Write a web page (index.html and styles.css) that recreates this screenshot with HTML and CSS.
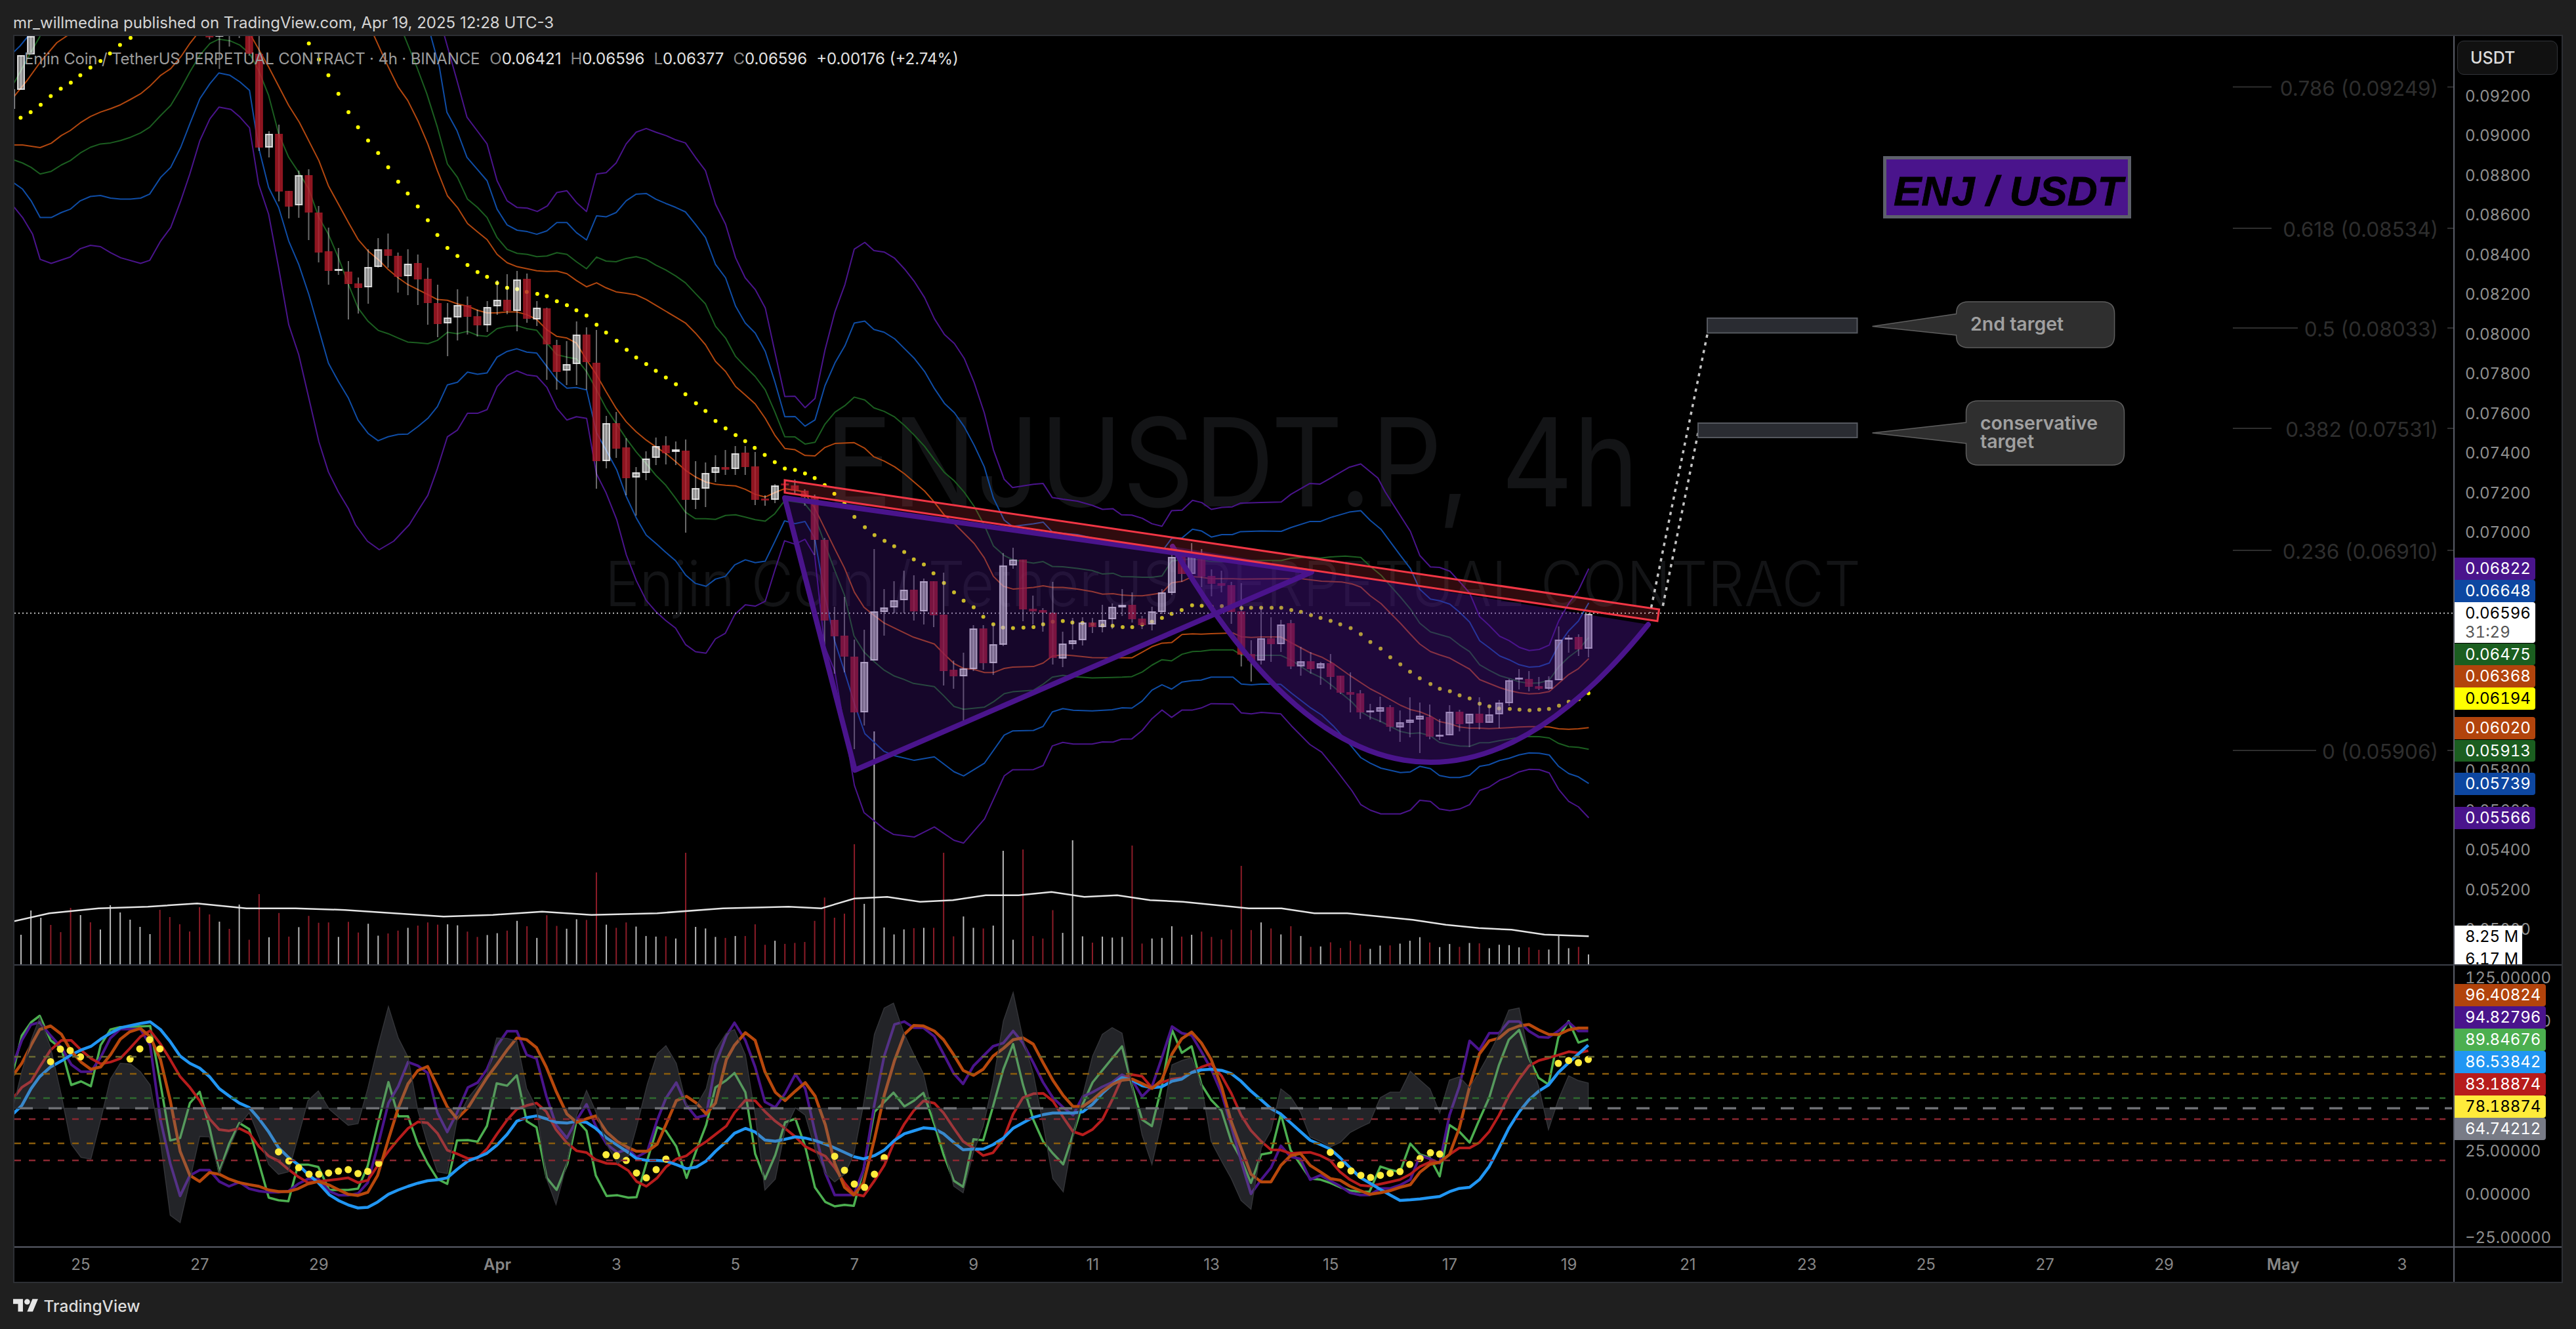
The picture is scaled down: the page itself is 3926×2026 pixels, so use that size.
FILE: index.html
```html
<!DOCTYPE html>
<html lang="en">
<head>
<meta charset="utf-8">
<title>ENJUSDT.P 4h chart</title>
<link rel="stylesheet" href="styles.css">
</head>
<body>
<header class="topbar">mr_willmedina published on TradingView.com, Apr 19, 2025 12:28 UTC-3</header>
<main class="frame">
  <section class="pane pane-main">
    <svg class="chart" id="mainChart" width="3717" height="1415" viewBox="22 55 3717 1415" xmlns="http://www.w3.org/2000/svg">
      <text class="wm wm-big" x="1258" y="772" textLength="1240" lengthAdjust="spacingAndGlyphs">ENJUSDT.P, 4h</text>
      <text class="wm wm-small" x="922" y="924" textLength="1914" lengthAdjust="spacingAndGlyphs">Enjin Coin / TetherUS PERPETUAL CONTRACT</text>
      <g id="series"></g>
      <line class="last-price" x1="22" y1="934.7" x2="3739" y2="934.7"/>
      <g class="drawings">
        <polygon class="tri" points="1196,759 1303,1174 1999,872"/>
        <path class="cup-fill" d="M1787 833 Q2130 1425 2512 952 Z"/>
        <path class="cup-line" d="M1787 833 Q2130 1425 2512 952"/>
        <polygon class="channel" points="1196,732 2528.6,929 2526,946.7 1196,751"/>
        <line class="dotted" x1="2602" y1="510" x2="2515" y2="934"/>
        <line class="dotted" x1="2588" y1="660" x2="2533" y2="930"/>
        <rect class="target" x="2602" y="485" width="228.500" height="22.500"/>
        <rect class="target" x="2588" y="645" width="242.500" height="22"/>
        <path class="callout" d="M3000 460H3204Q3222.600 460 3222.600 478V512Q3222.600 530 3204 530H3000Q2981.500 530 2981.500 512V511L2853.500 497.600L2981.500 478.500Q2981.500 460 3000 460Z"/>
        <text class="callout-text" x="3003" y="504">2nd target</text>
        <path class="callout" d="M3015 611H3219Q3237.500 611 3237.500 629V691Q3237.500 709 3219 709H3015Q2996.500 709 2996.500 691V676L2853.500 660L2996.500 644V629Q2996.500 611 3015 611Z"/>
        <text class="callout-text" x="3018" y="655">conservative</text>
        <text class="callout-text" x="3018" y="683">target</text>
        <rect class="pair-box" x="2872.500" y="240.500" width="373" height="90"/>
        <text class="pair-text" x="2886" y="313">ENJ / USDT</text>
      </g>
      <g class="fibs">
        <line x1="3403" y1="132.600" x2="3462" y2="132.600"/><line x1="3730" y1="132.600" x2="3739" y2="132.600"/>
        <text x="3716" y="146">0.786 (0.09249)</text>
        <line x1="3403" y1="348" x2="3462" y2="348"/><line x1="3730" y1="348" x2="3739" y2="348"/>
        <text x="3716" y="361">0.618 (0.08534)</text>
        <line x1="3403" y1="500" x2="3502" y2="500"/><line x1="3730" y1="500" x2="3739" y2="500"/>
        <text x="3716" y="513">0.5 (0.08033)</text>
        <line x1="3403" y1="653" x2="3462" y2="653"/><line x1="3730" y1="653" x2="3739" y2="653"/>
        <text x="3716" y="666">0.382 (0.07531)</text>
        <line x1="3403" y1="839" x2="3462" y2="839"/><line x1="3730" y1="839" x2="3739" y2="839"/>
        <text x="3716" y="852">0.236 (0.06910)</text>
        <line x1="3403" y1="1144" x2="3530" y2="1144"/><line x1="3730" y1="1144" x2="3739" y2="1144"/>
        <text x="3716" y="1157">0 (0.05906)</text>
      </g>
    </svg>
    <div class="legend">
      <span class="legend-title">Enjin Coin / TetherUS PERPETUAL CONTRACT · 4h · BINANCE</span>
      <span class="ohlc"><i>O</i>0.06421</span>
      <span class="ohlc"><i>H</i>0.06596</span>
      <span class="ohlc"><i>L</i>0.06377</span>
      <span class="ohlc"><i>C</i>0.06596</span>
      <span class="ohlc">+0.00176 (+2.74%)</span>
    </div>
  </section>
  <aside class="axis axis-main">
    <div class="currency">USDT</div>
    <div class="ticks ticks-main">
      <div>0.09200</div><div>0.09000</div><div>0.08800</div><div>0.08600</div><div>0.08400</div><div>0.08200</div>
      <div>0.08000</div><div>0.07800</div><div>0.07600</div><div>0.07400</div><div>0.07200</div><div>0.07000</div>
      <div>0.06800</div><div>0.06600</div><div>0.06400</div><div>0.06200</div><div>0.06000</div><div>0.05800</div>
      <div>0.05600</div><div>0.05400</div><div>0.05200</div><div>0.05000</div>
    </div>
    <div class="badge b-purple" style="top:795px">0.06822</div>
    <div class="badge b-blue" style="top:829px">0.06648</div>
    <div class="badge b-white" style="top:863px"><span>0.06596</span><small>31:29</small></div>
    <div class="badge b-green" style="top:925.500px">0.06475</div>
    <div class="badge b-orange" style="top:959px">0.06368</div>
    <div class="badge b-yellow" style="top:993px">0.06194</div>
    <div class="badge b-orange" style="top:1038px">0.06020</div>
    <div class="badge b-green" style="top:1072.500px">0.05913</div>
    <div class="badge b-blue" style="top:1123px">0.05739</div>
    <div class="badge b-purple" style="top:1175px">0.05566</div>
    <div class="badge badge-vol" style="top:1356px">8.25 M</div>
    <div class="badge badge-vol" style="top:1390px">6.17 M</div>
  </aside>
  <section class="pane pane-osc">
    <svg class="chart" id="oscChart" width="3717" height="428" viewBox="22 1472 3717 428" xmlns="http://www.w3.org/2000/svg"></svg>
  </section>
  <aside class="axis axis-osc">
    <div class="ticks ticks-osc">
      <div>125.00000</div><div>100.00000</div><div>75.00000</div><div>50.00000</div><div>25.00000</div><div>0.00000</div><div>−25.00000</div>
    </div>
    <div class="badge badge-osc b-orange2" style="top:28px">96.40824</div>
    <div class="badge badge-osc b-purple" style="top:62px">94.82796</div>
    <div class="badge badge-osc b-lime" style="top:96px">89.84676</div>
    <div class="badge badge-osc b-sky" style="top:130px">86.53842</div>
    <div class="badge badge-osc b-red" style="top:164px">83.18874</div>
    <div class="badge badge-osc b-lemon" style="top:198px">78.18874</div>
    <div class="badge badge-osc b-grey" style="top:232px">64.74212</div>
  </aside>
  <nav class="timescale">
    <span>25</span><span>27</span><span>29</span><span class="month">Apr</span><span>3</span><span>5</span><span>7</span><span>9</span><span>11</span><span>13</span><span>15</span><span>17</span><span>19</span><span>21</span><span>23</span><span>25</span><span>27</span><span>29</span><span class="month may">May</span><span>3</span>
  </nav>
  <div class="corner"></div>
</main>
<footer class="brand">
  <svg class="brand-logo" width="38.500" height="30" viewBox="0 0 36 28" xmlns="http://www.w3.org/2000/svg"><path d="M14 22H7V11H0V4h14v18zM28 22h-8l7.500-18h8L28 22z"/><circle cx="20" cy="8" r="4"/></svg>
  <span class="brand-name">TradingView</span>
</footer>
<script src="chart.js"></script>
</body>
</html>
```
FILE: styles.css
```css
* { box-sizing: border-box; }
html, body { margin: 0; padding: 0; }
body {
  width: 3926px;
  height: 2026px;
  overflow: hidden;
  background: #1f1f1f;
  font-family: Inter, "Liberation Sans", sans-serif;
  color: #d6d6d6;
}
.topbar {
  height: 53px;
  padding: 20px 0 0 20px;
  font-size: 24px;
  line-height: 30px;
  color: #d4d4d4;
  white-space: nowrap;
}
.frame {
  width: 3886px;
  height: 1903px;
  margin-left: 20px;
  border: 2px solid #2d2f34;
  display: grid;
  grid-template-columns: 3717px 165px;
  grid-template-rows: 1417px 430px 52px;
  background: #000;
}
.pane { position: relative; overflow: hidden; }
.pane-main { border-bottom: 2px solid #3c3f49; }
.pane-osc { border-bottom: 2px solid #5a5d68; }
.chart { display: block; }
.axis {
  position: relative;
  overflow: hidden;
  border-left: 2px solid #5a5d68;
  font-size: 24px;
  color: #8f8f8f;
  font-feature-settings: "tnum" 1;
}
.axis-main { border-bottom: 2px solid #3c3f49; }
.axis-osc { border-bottom: 2px solid #5a5d68; }
.currency {
  margin: 7px 6px 0 4px;
  height: 52px;
  padding-left: 19px;
  border: 1px solid #33353a;
  border-radius: 10px;
  background: #111;
  color: #dcdcdc;
  font-size: 25px;
  font-weight: 500;
  line-height: 50px;
}
.ticks { padding-left: 16px; }
.ticks div { white-space: nowrap; }
.ticks-main { margin-top: 2.750px; }
.ticks-main div { height: 60.500px; line-height: 60.500px; }
.ticks-osc { margin-top: -14px; }
.ticks-osc div { height: 66px; line-height: 66px; }
.badge {
  position: absolute;
  left: 0;
  width: 123px;
  height: 33.800px;
  padding-left: 16px;
  border-radius: 0 4px 4px 0;
  line-height: 33.800px;
  color: #fff;
  white-space: nowrap;
}
.badge-osc { width: 139px; height: 34px; line-height: 34px; }
.badge-vol { width: 103px; height: 34px; line-height: 34px; background: #fff; color: #000; border-radius: 0; }
.b-purple { background: #4a148c; }
.b-blue { background: #0d47a1; }
.b-green { background: #1b5e20; }
.b-orange, .b-orange2 { background: #b2440c; }
.b-yellow { background: #ffff00; color: #000; }
.b-white { height: 62px; background: #fff; color: #000; }
.b-white span, .b-white small { display: block; height: 28px; font-size: 24px; }
.b-white span { height: 34px; line-height: 34px; }
.b-white small { color: #555; line-height: 24px; }
.b-lime { background: #4caf50; }
.b-sky { background: #2196f3; }
.b-red { background: #b71c1c; }
.b-lemon { background: #ffeb3b; color: #000; }
.b-grey { background: #787b86; }
.timescale {
  display: flex;
  padding-left: 10.280px;
  font-size: 24px;
  line-height: 52px;
  color: #868686;
}
.timescale span { flex: 0 0 181.440px; text-align: center; }
.timescale .month { font-weight: 600; margin-left: 90.720px; }
.timescale .may { margin-left: 0; }
.corner { border-left: 2px solid #5a5d68; }
.legend {
  position: absolute;
  left: 15px;
  top: 20px;
  display: flex;
  font-size: 24px;
  line-height: 30px;
  white-space: nowrap;
  color: #e2e2e2;
}
.legend-title { color: #9c9c9c; margin-right: 15px; letter-spacing: -0.170px; }
.ohlc { margin-right: 14px; }
.ohlc i { font-style: normal; color: #8b8b8b; }
.brand {
  display: flex;
  align-items: center;
  gap: 8px;
  height: 70px;
  padding-left: 20px;
  color: #dcdcdc;
}
.brand-logo { fill: #e6e6e6; }
.brand-name { font-size: 24.500px; font-weight: 500; }
.wm { fill: #131416; font-family: Inter, sans-serif; font-weight: 400; }
.wm-big { font-size: 187px; }
.wm-small { font-size: 95px; font-weight: 300; }
.last-price { stroke: #bdbdbd; stroke-width: 2; stroke-dasharray: 2 4; }
.tri { fill: rgba(74, 20, 140, 0.3); stroke: #4a148c; stroke-width: 8; stroke-linejoin: round; }
.cup-fill { fill: rgba(74, 20, 140, 0.42); stroke: none; }
.cup-line { fill: none; stroke: #4a148c; stroke-width: 8; stroke-linecap: round; }
.channel { fill: rgba(242, 54, 69, 0.2); stroke: #f23645; stroke-width: 3; }
.dotted { stroke: #c4c4c4; stroke-width: 3.500; stroke-dasharray: 5 7; }
.target { fill: #2a2c32; stroke: #55585f; stroke-width: 2; }
.callout { fill: #2f2f2f; stroke: #5e5e5e; stroke-width: 1.500; }
.callout-text { fill: #a0a0a0; font-family: Inter, sans-serif; font-size: 28.500px; font-weight: 600; }
.pair-box { fill: #4a148c; stroke: #5d606b; stroke-width: 5; }
.pair-text { fill: #000; stroke: #000; stroke-width: 0.800; font-family: "Liberation Sans", Arial, sans-serif; font-size: 63.500px; font-weight: 700; font-style: italic; }
.fibs line { stroke: #2e2e2e; stroke-width: 2; }
.fibs text { fill: #2e2e2e; font-family: Inter, sans-serif; font-size: 31.500px; text-anchor: end; }
.band { fill: none; stroke-width: 2; stroke-linejoin: round; }
.vol-ma { fill: none; stroke: #e4e4e4; stroke-width: 2.500; }
.osc-line { fill: none; stroke-linejoin: round; }
.osc-area { fill: rgba(106, 108, 120, 0.33); stroke: #333438; stroke-width: 1.500; }
.dash { stroke-width: 2.500; stroke-dasharray: 10 12; }
.dash-mid { stroke: #6e6f74; stroke-width: 3.500; stroke-dasharray: 20 24; }
```
FILE: chart.js
```js
(function () {
  var NS = 'http://www.w3.org/2000/svg';
  function el(parent, name, attrs) {
    var n = document.createElementNS(NS, name);
    for (var k in attrs) n.setAttribute(k, attrs[k]);
    parent.appendChild(n);
    return n;
  }
  function parse(s) {
    return s.trim().split(/\s+/).map(function (p) {
      var a = p.split(','); return [parseFloat(a[0]), parseFloat(a[1])];
    });
  }
  var tf = {
    a: function (p) { return p; },
    o: function (p) { return [p[0] * 2.504, p[1] * 2.504]; },
    z1: function (p) { return [p[0] / 0.98, p[1] / 3]; },
    z5: function (p) { return [1100 + p[0] / 1.568, 650 + p[1] / 2.412]; },
    z6: function (p) { return [1800 + p[0] / 1.96, 750 + p[1] / 3]; },
    z7: function (p) { return [p[0] / 1.206, 1450 + p[1] / 2.72]; },
    z8: function (p) { return [p[0] / 1.3067, p[1] / 1.96]; },
    z10: function (p) { return [1200 + p[0] / 1.206, 1450 + p[1] / 3]; },
    z11: function (p) { return [880 + p[0] / 2.306, 330 + p[1] / 2.306]; }
  };
  function pts(name, s) { return parse(s).map(tf[name]); }
  function chain() {
    var out = [];
    for (var i = 0; i < arguments.length; i += 2) out = out.concat(pts(arguments[i], arguments[i + 1]));
    return out;
  }
  function str(list) { return list.map(function (p) { return p[0].toFixed(1) + ',' + p[1].toFixed(1); }).join(' '); }

  /* candles: index -> [high, bodyTop, bodyBottom, low, isUp] (pixel rows) */
  var X0 = 32, STEP = 15.12;
  var first = {
    '-1': [136, 136, 166, 166, 1], 0: [84, 84, 137, 137, 1], 1: [55, 55, 83, 83, 1],
    19: [40, 40, 57, 60, 0], 20: [40, 40, 56, 105, 1], 21: [40, 40, 50, 71, 0], 22: [40, 40, 50, 58, 1]
  };
  var rows = [
    [23,53,53,82,85,0],[24,53,82,225,230,0],[25,200,204,225,240,1],[26,190,204,292,307,0],[27,291,291,315,333,0],
    [28,260,267,313,332,1],[29,258,267,324,366,0],[30,314,324,385,400,0],[31,347,383,413,434,0],[32,378,410,413,419,1],
    [33,398,414,433,487,0],[34,423,432,439,478,0],[35,380,407,438,463,1],[36,363,380,407,408,1],[37,356,380,390,408,0],
    [38,385,390,422,446,0],[39,380,402,421,450,1],[40,388,401,426,465,0],[41,408,425,462,495,0],[42,434,462,494,514,0],
    [43,462,484,493,543,1],[44,441,465,484,519,1],[45,452,465,483,510,0],[46,472,482,496,513,0],[47,459,468,496,506,1],
    [48,427,457,467,480,1],[49,418,457,474,479,0],[50,413,426,474,505,1],[51,417,425,486,492,0],[52,459,469,487,497,1],
    [53,469,470,525,579,0],[54,518,526,567,594,0],[55,520,555,565,587,1],[56,490,510,555,587,1],[57,499,510,552,594,0],
    [58,503,553,703,745,0],[59,634,645,703,714,1],[60,628,645,684,698,0],[61,668,682,729,755,0],[62,712,720,728,786,1],
    [63,688,699,721,732,1],[64,667,680,698,709,1],[65,665,679,691,708,0],[66,673,685,689,709,1],[67,670,687,762,812,0],
    [68,703,744,762,776,1],[69,705,721,745,773,1],[70,694,712,721,735,1],[71,686,712,716,724,0],[72,680,691,715,724,1],
    [73,680,690,712,724,0],[74,689,711,762,770,0],[75,755,760,763,771,0],[76,738,740,762,767,1],[77,732,737,740,751,0],
    [78,731,740,748,753,0],[79,746,748,758,771,0],[80,754,757,823,846,0],[81,820,823,946,986,0],[82,925,945,970,1027,0],
    [83,910,969,1001,1025,0],[84,975,1001,1086,1142,0],[85,960,1009,1086,1106,1],[86,837,932,1007,1007,1],[87,898,926,933,969,1],
    [88,886,915,926,935,1],[89,870,899,915,935,1],[90,877,899,932,946,0],[91,882,886,932,952,1],[92,886,886,938,956,0],
    [93,873,937,1023,1045,0],[94,1007,1021,1031,1050,0],[95,995,1019,1031,1101,1],[96,953,958,1020,1023,1],[97,953,958,1011,1021,0],
    [98,952,982,1011,1029,1],[99,843,862,983,985,1],[100,835,853,862,867,1],[101,853,853,929,947,0],[102,908,928,932,952,0],
    [103,927,930,934,963,0],[104,887,934,1003,1013,0],[105,963,981,1004,1017,1],[106,942,976,982,990,1],[107,941,949,976,984,1],
    [108,942,949,956,965,0],[109,922,945,956,964,1],[110,920,925,944,959,1],[111,898,922,926,939,1],[112,903,922,944,949,0],
    [113,939,943,953,959,0],[114,925,932,952,961,1],[115,898,903,933,936,1],[116,832,849,904,907,1],[117,845,848,875,887,0],
    [118,828,847,875,876,1],[119,837,847,879,895,0],[120,868,878,890,909,0],[121,870,889,893,903,0],[122,887,892,933,951,0],
    [123,889,932,998,1016,0],[124,976,997,1007,1039,0],[125,926,973,1007,1013,1],[126,941,973,982,1009,0],[127,945,952,982,994,1],
    [128,945,950,1016,1020,0],[129,986,1008,1016,1030,1],[130,994,1008,1020,1027,0],[131,1009,1011,1019,1044,1],[132,997,1011,1032,1051,0],
    [133,1030,1030,1056,1058,0],[134,1025,1055,1059,1086,0],[135,1052,1057,1086,1096,0],[136,1073,1083,1085,1097,1],[137,1062,1078,1085,1101,1],
    [138,1075,1078,1108,1115,0],[139,1083,1101,1109,1131,1],[140,1063,1097,1102,1124,1],[141,1071,1091,1097,1148,1],[142,1074,1093,1123,1127,0],
    [143,1096,1120,1122,1128,1],[144,1075,1085,1121,1121,1],[145,1082,1085,1104,1115,0],[146,1088,1088,1103,1139,1],[147,1063,1088,1102,1112,0],
    [148,1075,1089,1102,1102,1],[149,1067,1071,1089,1110,1],[150,1035,1037,1072,1076,1],[151,1020,1033,1035,1051,1],[152,1023,1035,1047,1054,0],
    [153,1032,1046,1050,1052,0],[154,1031,1037,1050,1052,1],[155,955,975,1037,1037,1],[156,968,972,974,995,1],[157,967,971,990,1000,0],
    [158,935,936,989,1002,1]
  ];
  var candles = {};
  Object.keys(first).forEach(function (k) { candles[k] = first[k]; });
  rows.forEach(function (r) { candles[r[0]] = r.slice(1); });
  function xOf(i) { return X0 + STEP * i; }

  var bands = [
    ['#4a148c', chain('z8', '885,107 910,240 930,350 950,390 970,430 990,540 1010,600 1030,620 1050,622 1070,632 1090,615 1109,575 1129,570 1148,605 1168,632 1188,520 1207,516 1227,487 1247,430 1267,395 1287,384 1306,395 1326,405 1346,418 1365,427 1385,470 1405,510 1425,610 1445,670 1465,770 1484,830 1504,865 1524,920 1543,1050 1563,1185',
      'z11', '765,632 800,672 835,640 870,470 905,335 940,240 973,115 1010,91 1042,120 1078,125 1115,147 1150,185 1185,230 1220,285 1255,360 1290,415 1325,447 1360,500 1395,585 1430,690 1462,820',
      'z5', '675,195 695,225 745,213 768,210 790,262 815,268 850,275 885,290 910,305 935,303 955,325 980,326 1005,338 1028,358 1052,367 1075,310 1100,308 1125,272 1147,280 1170,305 1195,298 1220,296 1240,282 1290,280 1337,278 1360,250 1405,210 1430,212 1455,190 1500,150 1527,138 1568,190',
      'z6', '610,0 685,180 713,290 745,343 772,345 803,362 832,410 862,462 892,570 920,610 952,660 980,680 1010,710 1040,725 1070,720 1100,700 1128,590 1158,510 1187,450 1218,350')],
    ['#0f4da6', chain('z8', '858,107 875,200 890,335 910,390 930,470 950,505 970,540 990,625 1010,672 1030,688 1050,692 1069,700 1089,690 1109,665 1129,665 1148,695 1168,717 1188,645 1207,648 1227,635 1247,600 1267,580 1287,578 1306,595 1326,608 1346,620 1365,633 1385,670 1405,710 1425,790 1445,830 1465,915 1484,965 1504,995 1524,1050 1543,1140 1563,1245',
      'z11', '765,703 800,737 835,715 870,595 905,515 940,455 973,375 1010,368 1042,397 1078,407 1115,430 1150,465 1185,500 1220,545 1255,605 1290,657 1325,690 1360,740 1395,805 1430,880 1462,990',
      'z5', '675,345 695,368 745,358 768,352 790,388 815,393 850,398 885,410 910,425 935,423 955,438 980,438 1005,445 1028,455 1052,460 1075,412 1100,410 1125,378 1147,385 1170,407 1195,398 1220,398 1240,387 1290,385 1337,386 1360,372 1405,350 1430,350 1455,335 1500,315 1527,310',
      'z6', '565,130 597,170 655,290 685,350 713,445 745,490 772,497 803,513 832,550 862,595 892,680 920,712 952,750 980,767 1010,790 1040,801 1070,798 1100,782 1128,700 1158,635 1187,590 1218,507')],
    ['#1b5e20', chain('z8', '805,107 830,200 850,280 871,380 891,490 911,530 931,595 951,620 970,650 990,710 1010,745 1030,757 1050,760 1069,767 1089,765 1109,755 1129,760 1148,782 1168,803 1188,768 1207,780 1227,782 1247,772 1267,767 1287,775 1306,792 1326,807 1346,825 1365,845 1385,877 1405,908 1425,975 1445,1010 1465,1065 1484,1095 1504,1125 1524,1165 1543,1230 1563,1305',
      'z11', '765,775 800,800 835,794 870,730 905,688 940,665 973,635 1010,645 1042,673 1078,685 1115,705 1150,735 1185,770 1220,808 1255,855 1290,900 1325,930 1360,970 1395,1020 1430,1085 1462,1158',
      'z5', '675,475 695,490 745,503 768,497 790,515 815,516 850,522 885,530 910,543 935,540 955,552 980,553 1005,555 1028,555 1052,550 1075,495 1100,490 1125,487 1170,497 1195,498 1220,495 1240,493 1290,493 1337,493 1360,485 1405,480 1430,484 1455,480 1490,477 1527,482',
      'z6', '565,340 597,380 655,480 685,535 713,600 745,640 772,652 803,665 832,700 862,730 892,790 920,815 952,840 980,853 1010,868 1040,875 1070,873 1100,860 1128,800 1158,755 1187,722 1218,665')],
    ['#b2470f', chain('z8', '745,107 770,190 793,260 812,300 832,360 852,430 871,510 891,585 911,620 931,668 951,693 970,716 990,760 1010,785 1030,797 1050,803 1069,809 1089,811 1109,810 1129,818 1148,838 1168,857 1188,845 1207,860 1227,872 1247,876 1267,881 1287,895 1306,912 1326,930 1346,948 1365,965 1385,995 1405,1030 1425,1080 1445,1110 1465,1155 1484,1180 1504,1207 1524,1250 1543,1300 1563,1340',
      'z11', '765,820 800,840 835,842 870,812 905,798 973,795 1010,815 1042,845 1078,860 1115,880 1150,905 1185,935 1220,965 1255,1005 1290,1050 1325,1080 1360,1115 1395,1150 1430,1200 1462,1265 1497,1300 1532,1310',
      'z5', '745,592 768,586 790,592 815,592 850,598 885,607 910,617 935,615 955,620 980,622 1005,623 1028,618 1052,612 1075,575 1100,570 1125,552',
      'z6', '60,390 90,397 155,397 180,398 298,397 360,397 420,408 480,412 510,420 537,435 565,475 597,510 655,600 685,650 713,695 745,730 772,745 803,760 832,785 862,810 892,858 920,875 952,895 980,908 1010,918 1040,923 1070,921 1100,913 1128,875 1158,835 1187,808 1218,762')],
    ['#b2470f', chain('z8', '500,107 535,200 575,315 596,365 635,480 654,555 694,665 713,715 733,750 753,775 773,805 793,830 812,850 832,865 852,880 871,895 891,897 911,908 931,915 951,927 970,935 990,935 1010,932 1029,932 1049,940 1069,955 1089,985 1109,1005 1129,1010 1148,1025 1168,1075 1188,1120 1207,1170 1227,1220 1247,1260 1267,1290 1287,1315 1306,1335 1326,1355 1346,1380 1365,1405 1385,1425 1405,1440 1425,1447 1445,1450 1465,1452 1484,1462 1504,1477 1524,1485 1543,1472 1563,1460',
      'z5', '197,240 222,300 270,450 293,520 317,610 340,665 364,695 387,722 411,740 458,775 508,800 530,835 555,872 578,890 601,893 628,905 650,905 675,890 695,885 745,883 768,870 790,845 815,840 840,843 885,850 933,851 957,851 980,851 1005,830 1028,810 1052,797 1075,795 1100,765 1125,763',
      'z6', '60,650 90,648 155,645 180,662 210,665 240,663 298,663 330,690 385,735 420,755 455,785 510,845 565,900 597,925 655,975 685,995 713,1005 745,1025 772,1050 803,1060 832,1075 862,1080 892,1080 920,1082 952,1080 980,1078 1010,1075 1040,1073 1070,1073 1100,1075 1128,1083 1158,1085 1187,1083 1218,1078')],
    ['#1b5e20', chain('z8', '26,477 45,487 62,500 80,520 102,512 122,493 140,480 160,457 180,440 200,430 220,427 240,420 260,410 280,397 298,380 320,345 340,315 360,265 378,215 398,165 418,130 436,117 458,122 478,135 497,160 515,210 535,285 555,400 575,470 595,515 615,565 635,650 654,700 674,770 694,850 713,920 733,960 753,987 773,997 793,1010 812,1022 832,1024 852,1027 871,1017 891,993 911,997 931,990 951,1002 970,1005 990,982 1010,975 1029,973 1049,982 1069,987 1089,1025 1109,1060 1129,1067 1148,1072 1168,1110 1188,1165 1207,1220 1227,1265 1247,1310 1267,1350 1287,1385 1306,1420 1326,1450 1346,1490 1365,1530 1385,1550 1405,1550 1425,1552 1445,1540 1465,1538 1484,1545 1504,1553 1524,1557 1543,1535 1563,1495',
      'z5', '197,282 222,330 246,430 270,530 293,620 316,770 340,830 364,865 387,895 411,917 435,930 458,945 508,957 530,990 555,1030 578,1040 628,1032 650,1012 675,983 695,976 745,970 768,948 790,922 815,915 840,920 885,925 933,923 957,922 980,920 1005,903 1028,878 1052,858 1075,862 1100,838 1125,828',
      'z6', '60,728 90,722 155,722 180,745 210,748 240,747 298,747 330,770 385,825 420,850 455,890 510,960 537,1005 565,1030 597,1050 655,1095 685,1105 713,1102 745,1115 772,1145 803,1155 832,1162 862,1163 892,1147 920,1147 952,1137 980,1130 1010,1122 1040,1118 1070,1119 1100,1125 1128,1150 1158,1165 1187,1168 1218,1177')],
    ['#0f4da6', chain('z8', '26,545 45,565 62,600 80,650 102,650 122,635 140,625 160,600 180,587 200,584 220,592 240,595 260,595 280,592 298,580 320,530 340,500 360,440 378,370 398,295 418,250 436,218 458,225 478,245 497,270 515,440 535,560 555,620 575,720 595,790 615,880 635,985 654,1085 674,1140 694,1190 713,1255 733,1295 753,1317 773,1305 793,1298 812,1297 832,1275 852,1250 871,1215 891,1150 911,1142 931,1112 951,1118 970,1114 990,1067 1010,1050 1029,1042 1049,1052 1069,1055 1089,1095 1109,1135 1129,1160 1148,1158 1168,1165',
      'z11', '33,612 67,760 100,820 138,890 172,985 207,1060 242,1120 277,1150 310,1180 345,1210 380,1260 415,1290 452,1300 485,1275 520,1265 553,1225 590,1207 625,1217 660,1212 695,1140 728,1070 765,1080 800,1072',
      'z5', '222,410 246,620 270,790 293,900 317,1020 342,1130 388,1195 411,1210 460,1228 508,1215 555,1270 578,1285 628,1238 675,1135 695,1120 745,1118 768,1103 790,1050 815,1038 840,1044 885,1046 933,1042 957,1035 980,1036 1005,1010 1028,970 1052,950 1075,966 1100,940 1125,935',
      'z6', '60,860 90,847 155,847 180,878 210,882 240,878 298,880 330,920 385,985 420,1020 455,1070 510,1165 537,1215 565,1240 597,1263 655,1283 685,1280 713,1255 745,1265 772,1297 803,1306 832,1306 862,1295 892,1255 920,1247 952,1228 980,1218 1010,1202 1040,1193 1070,1195 1100,1203 1128,1255 1158,1288 1187,1303 1218,1333')],
    ['#4a148c', chain('z8', '26,615 45,650 65,700 80,775 102,787 140,768 160,743 180,733 200,737 220,755 240,770 280,787 298,778 320,720 340,680 360,600 378,520 398,420 418,355 436,320 460,327 478,350 497,382 515,550 535,640 555,800 575,970 595,1060 615,1190 635,1320 654,1410 674,1470 694,1520 708,1568',
      'a', '560,825 578,838 600,825',
      'z8', '815,1568 835,1520 852,1480 871,1400 891,1305 911,1285 931,1235 951,1235 970,1224 990,1155 1010,1122 1029,1108 1049,1120 1069,1124 1089,1157 1109,1220 1129,1255 1148,1245 1168,1250',
      'z11', '33,713 67,905 100,970 138,1065 172,1190 207,1280 242,1350 277,1390 310,1420 345,1447 380,1505 415,1530 452,1535 485,1485 520,1465 553,1400 590,1365 625,1370 660,1353 695,1240 728,1140 765,1152 800,1135',
      'z5', '222,475 246,810 270,900 317,1320 340,1420 388,1480 410,1500 460,1510 508,1473 555,1522 578,1532 628,1443 675,1285 695,1263 745,1262 768,1247 790,1175 815,1162 840,1168 885,1168 910,1160 935,1161 955,1150 980,1149 1005,1118 1028,1075 1052,1043 1075,1070 1100,1043 1125,1043',
      'z6', '60,988 90,968 155,970 180,1010 210,1015 240,1008 298,1015 330,1070 385,1155 420,1190 455,1255 510,1365 537,1430 565,1455 597,1472 655,1472 685,1455 713,1410 745,1415 772,1450 803,1457 832,1450 862,1430 892,1365 920,1350 952,1318 980,1303 1010,1280 1040,1268 1070,1270 1100,1285 1128,1360 1158,1415 1187,1440 1218,1490')],
    ['#b2470f', chain('z8', '26,433 45,433 80,441 102,428 122,405 140,390 160,367 180,348 200,335 220,325 240,313 260,297 280,280 298,258 320,225 340,205 360,170 378,130 390,107')],
    ['#b2470f', chain('z1', '20,445 40,370 60,285 85,195 102,160')],
    ['#1b5e20', chain('z1', '20,385 30,330 46,240 60,165')],
    ['#0f4da6', chain('z1', '20,240 30,210 42,165')]
  ];

  var dots = chain(
    'z8', '41,352 61,335 81,313 101,287 121,265 141,247 160,225 180,202 200,182 219,160 239,134 260,113 615,130 635,178 654,225 674,280 694,335 713,380 733,420 753,457 773,500 793,543 812,578 832,617 852,658 871,702 891,741 911,765 931,792 951,813 970,827 990,846 1010,860 1030,864 1049,872 1070,878 1089,885 1109,900 1129,912 1148,927 1168,943 1188,970 1207,994 1228,1018 1248,1045 1267,1068 1287,1088 1306,1108 1326,1128 1346,1148 1365,1178 1386,1205 1405,1228 1425,1258 1445,1280 1465,1300 1484,1318 1503,1338 1523,1359 1543,1381 1563,1400',
    'z5', '175,160 199,173 222,190 246,216 269,248 293,284 317,333 342,371 365,400 389,421 412,441 436,462 459,489 483,508 506,540 531,576 555,610 578,641 602,665 625,700 649,728 672,740 696,742 721,740 745,738 768,728 791,718 815,716 838,721 862,723 886,728 910,732 934,733 958,738 981,738 1005,728 1028,718 1052,704 1075,689 1099,675 1124,658 1147,660 1171,663 1195,661 1218,660 1242,668 1265,667 1289,667 1314,667 1337,667 1361,675 1384,682 1408,694 1431,704 1455,715 1478,728 1503,742 1527,764 1550,793',
    'z6', '596,716 625,756 655,788 684,822 713,852 745,878 773,900 803,911 832,930 862,944 892,968 921,980 950,990 982,992 1011,995 1041,998 1070,995 1099,992 1129,977 1158,959 1188,947 1217,920');

  /* main pane */
  var g = document.getElementById('series');
  var leftColors = [1, 1, 1, 0, 0, 0, 1, 0, 1, 1, 1, 1, 1, 1, 0, 0, 0, 0, 0];
  var volTop = { 58: 1330, 67: 1300, 84: 1287, 86: 1115, 93: 1300, 99: 1297, 101: 1295, 106: 1281, 112: 1289, 123: 1320, 158: 1455 };
  for (var i = 0; i <= 158; i++) {
    var c = candles[i], x = xOf(i), up = c ? c[4] : leftColors[i], top;
    if (volTop[i]) top = volTop[i];
    else if (c && i > 22) top = 1470 - Math.min(120, 22 + (c[3] - c[0]) * 0.48) * (i >= 130 ? 0.7 : 1);
    else top = 1470 - (45 + (i * 37) % 48);
    el(g, 'rect', { x: (x - 1).toFixed(2), y: top.toFixed(1), width: 2, height: (1470 - top).toFixed(1), fill: up ? '#b8b8b8' : '#8c1c28' });
  }
  el(g, 'polyline', { 'class': 'vol-ma', points: str(pts('o', '8,561 30,556 60,553 90,552 120,550 150,553 180,553 210,554 240,556 270,558 300,557 330,555 360,557 400,556 440,553 480,552 500,553 520,547 540,546 560,549 580,548 600,545 620,545 640,543 660,546 680,545 700,548 720,549 740,551 760,553 780,553 800,556 820,556 840,558 860,560 880,563 900,565 920,566 940,569 967,570')) });
  bands.forEach(function (b) { el(g, 'polyline', { 'class': 'band', stroke: b[0], points: str(b[1]) }); });
  dots.forEach(function (d) { el(g, 'circle', { cx: d[0].toFixed(1), cy: d[1].toFixed(1), r: 3, fill: '#ffff00' }); });
  Object.keys(candles).forEach(function (k) {
    var r = candles[k], x = xOf(+k);
    el(g, 'rect', { x: (x - 1).toFixed(2), y: r[0], width: 2, height: r[3] - r[0], fill: 'rgba(255,255,255,0.42)' });
    var h = Math.max(3, r[2] - r[1]);
    if (r[4]) el(g, 'rect', { x: (x - 5).toFixed(2), y: r[1] + 1, width: 10, height: Math.max(1, h - 2), fill: 'rgba(255,255,255,0.54)', stroke: 'rgba(255,255,255,0.78)', 'stroke-width': 2 });
    else el(g, 'rect', { x: (x - 6).toFixed(2), y: r[1], width: 12, height: h, fill: 'rgba(178,26,40,0.8)' });
  });

  /* oscillator pane */
  var o = document.getElementById('oscChart');
  var lines = [
    ['#4caf50', 3.5, chain('z7', '24,500 40,350 57,295 73,268 93,370 113,405 131,555 149,540 167,560 185,390 203,325 221,315 258,312 276,310 295,550 313,785 331,775 349,630 367,583 385,730 403,915 421,800 440,713 458,738 476,880 494,1022 512,1033 530,1037 548,885 566,885 585,895 605,990 640,990 658,985 676,890 694,720 714,543 732,685 750,685 768,800 786,880 804,945 822,965 840,785 860,783 878,790 895,725 913,548 932,558 950,515 968,705 986,730 1005,940 1023,990 1043,880 1060,700 1078,745 1095,930 1115,1015 1135,1012 1155,1022 1170,1020 1190,865 1208,730 1224,745 1243,810 1262,940 1280,825 1298,720 1315,565 1335,535 1350,505 1370,585 1388,840 1406,945 1425,845 1443,710 1462,695 1480,810 1498,980 1517,1040',
      'z10', '87,1167 105,1160 122,1165 140,1000 160,735 178,690 195,647 215,710 232,685 250,648 270,790 287,930 306,1050 323,1078 342,860 360,865 378,710 397,540 415,425 433,610 452,770 470,870 488,925 507,975 525,840 543,700 561,600 579,545 597,490 615,435 634,620 652,770 670,800 688,620 707,360 725,465 743,435 761,610 779,680 798,730 816,870 834,950 852,1060 871,930 889,922 907,745 925,910 943,975 961,1040 980,1045 998,1060 1016,1080 1034,1095 1053,1100 1070,1100 1090,985 1108,1000 1126,1010 1145,880 1163,930 1181,945 1199,1030 1217,795 1235,825 1254,875 1272,770 1290,670 1308,520 1326,405 1345,360 1363,490 1381,580 1399,610 1417,395 1436,320 1454,418 1472,403')],
    ['#4a148c', 4, chain('z7', '24,470 40,370 57,305 73,295 93,350 113,400 131,470 149,500 167,500 185,440 203,360 221,323 258,323 276,390 295,700 313,880 331,1015 349,930 367,908 385,908 403,955 421,975 440,958 458,985 476,995 494,1000 512,1000 530,995 548,965 566,945 585,945 605,995 623,1012 640,1012 658,1005 676,960 694,810 714,630 732,560 750,460 768,475 786,505 804,670 822,750 840,670 860,565 878,545 895,490 913,395 932,332 950,332 968,430 986,445 1004,600 1022,720 1042,775 1060,700 1078,635 1095,725 1115,800 1135,835 1155,820 1170,855 1190,830 1208,700 1224,610 1243,545 1262,640 1280,690 1298,680 1315,470 1335,350 1350,297 1370,370 1388,480 1406,625 1425,648 1443,590 1462,510 1480,570 1498,750 1517,920',
      'z10', '87,1115 105,1115 122,1115 140,1000 160,700 178,480 197,335 215,322 232,350 250,350 270,390 287,470 306,560 323,607 342,525 360,480 378,435 397,420 415,365 433,420 452,510 470,600 488,670 507,715 525,750 543,665 561,645 579,620 597,600 615,565 634,590 652,665 670,620 688,490 707,345 725,375 743,385 761,460 779,540 798,650 816,800 834,960 852,1110 871,1045 889,990 907,890 925,940 943,950 961,1045 980,1025 998,1050 1016,1075 1034,1105 1053,1115 1070,1115 1090,1085 1108,1085 1126,1070 1145,1045 1163,935 1181,950 1199,970 1217,750 1235,620 1254,410 1272,452 1290,375 1308,375 1326,322 1345,322 1363,365 1381,392 1399,395 1417,365 1436,325 1454,365 1472,365')],
    ['#b71c1c', 4, chain('z7', '24,610 40,565 57,540 73,480 93,410 113,370 131,370 149,410 167,445 185,467 203,460 221,445 238,405 258,355 276,330 295,385 313,450 331,520 349,565 367,620 385,695 403,740 421,745 440,735 458,755 476,810 494,850 512,870 530,905 548,935 566,960 585,955 605,950 623,945 640,940 658,960 676,950 694,890 714,830 732,780 750,735 768,708 786,712 804,755 822,825 840,840 860,860 878,858 895,820 913,760 932,700 950,655 968,640 986,630 1004,665 1022,740 1042,795 1060,828 1078,835 1095,865 1115,880 1135,882 1155,910 1170,955 1188,975 1208,940 1224,895 1243,862 1262,848 1280,815 1298,790 1315,760 1335,725 1350,670 1370,618 1388,620 1406,665 1425,705 1443,735 1462,770 1480,810 1498,830 1517,850',
      'z10', '87,990 105,1060 122,1110 140,1120 160,1050 178,980 197,870 215,790 232,730 250,685 270,695 287,740 306,810 323,870 342,900 360,935 378,922 397,860 415,745 433,670 452,652 470,650 488,685 507,760 525,825 543,840 561,815 579,770 597,680 615,580 634,565 652,572 670,625 688,600 707,585 725,580 743,555 761,530 779,515 798,570 816,650 834,750 852,820 871,870 889,908 907,910 925,925 943,922 961,920 980,935 998,958 1016,1010 1034,1045 1053,1070 1070,1075 1090,1065 1108,1055 1126,1045 1145,1020 1163,985 1181,965 1199,965 1217,930 1235,900 1254,900 1272,875 1290,825 1308,750 1326,660 1345,585 1363,525 1381,500 1399,488 1417,475 1436,460 1454,465 1472,455')],
    ['#2196f3', 4.5, chain('z7', '24,675 40,640 57,570 73,520 93,480 113,455 131,430 149,410 167,395 185,365 203,340 221,318 258,300 276,293 295,325 313,375 331,435 349,465 367,485 385,520 403,570 421,600 440,630 458,648 476,695 494,750 512,815 530,855 548,885 566,925 585,960 605,1010 623,1035 640,1052 658,1065 676,1062 694,1040 714,1008 732,990 750,975 768,962 786,952 804,948 822,940 840,905 860,870 878,855 895,838 913,805 932,760 950,705 968,690 986,683 1004,695 1022,710 1042,713 1060,705 1078,710 1095,735 1115,775 1135,805 1155,835 1170,860 1190,868 1208,868 1224,870 1243,885 1262,902 1280,895 1298,870 1315,830 1335,790 1350,755 1370,735 1388,750 1406,783 1425,788 1443,780 1462,770 1480,775 1498,785 1517,800',
      'z10', '87,900 105,920 122,940 140,950 160,935 178,910 197,865 215,835 232,822 250,808 270,812 287,835 306,875 323,908 342,905 360,905 378,885 397,855 415,810 433,785 452,760 470,748 488,740 507,740 525,740 543,735 561,700 579,650 597,610 615,578 634,590 652,615 670,625 688,620 707,595 725,585 743,555 761,543 779,540 798,545 816,560 834,595 852,640 871,680 889,720 907,745 925,785 943,825 961,865 980,885 998,905 1016,945 1034,990 1053,1035 1070,1060 1090,1090 1108,1115 1126,1140 1145,1137 1163,1133 1181,1127 1199,1122 1217,1100 1235,1085 1254,1080 1272,1045 1290,985 1308,900 1326,810 1345,735 1363,680 1381,640 1399,612 1417,555 1436,510 1454,470 1472,430')],
    ['#b8480c', 4.5, chain('z7', '24,515 40,465 57,390 73,325 93,310 113,345 131,415 149,460 167,490 185,480 203,430 221,365 238,335 258,320 276,355 295,450 313,620 331,830 349,930 367,955 385,918 403,925 421,945 440,960 458,968 476,975 494,990 512,997 530,997 548,985 566,965 585,955 605,970 623,990 640,1008 658,1013 676,1000 694,930 714,780 732,650 750,550 768,495 786,478 804,560 822,645 840,695 860,650 878,585 895,525 913,470 932,410 950,360 968,367 986,400 1004,480 1022,580 1042,675 1060,710 1078,695 1095,683 1115,750 1135,790 1155,815 1170,830 1190,830 1208,800 1224,720 1243,620 1262,602 1280,630 1298,675 1315,630 1335,450 1350,390 1370,338 1388,370 1406,500 1425,585 1443,620 1462,580 1480,545 1498,600 1517,720',
      'z10', '87,970 105,1080 122,1115 140,1060 160,860 178,660 197,500 215,380 232,340 250,342 270,365 287,405 306,475 323,545 342,568 360,540 378,480 397,445 415,405 433,397 452,425 470,510 488,590 507,660 525,710 543,710 561,680 579,640 597,610 615,590 634,585 652,605 670,628 688,590 707,470 725,400 743,370 761,420 779,495 798,620 816,780 834,900 852,1020 871,1055 889,1055 907,980 925,935 943,925 961,980 980,1010 998,1040 1016,1048 1034,1075 1053,1095 1070,1112 1090,1105 1108,1095 1126,1080 1145,1068 1163,1010 1181,975 1199,965 1217,930 1235,810 1254,620 1272,470 1290,410 1308,398 1326,360 1345,342 1363,335 1381,360 1399,380 1417,382 1436,360 1454,352 1472,352')]
  ];
  var areaPts = chain('z7', '24,650 40,500 57,370 73,275 93,400 113,600 131,800 149,855 167,862 185,700 203,530 221,465 240,468 258,500 276,555 295,790 313,1095 331,1125 349,950 367,768 385,770 403,920 421,820 440,720 458,670 476,770 494,885 512,925 530,915 548,770 566,620 585,580 605,655 623,690 640,722 658,715 676,570 694,400 714,230 732,360 750,440 768,660 786,800 804,915 822,922 840,700 860,610 878,560 895,510 913,360 932,362 950,372 968,570 986,650 1004,940 1022,1050 1042,880 1060,680 1078,578 1095,665 1115,800 1135,880 1155,850 1170,730 1190,550 1208,425 1224,392 1243,465 1262,640 1280,640 1298,570 1315,410 1335,340 1350,325 1370,430 1388,680 1406,990 1425,945 1443,740 1462,650 1480,680 1498,820 1517,920',
    'z10', '87,1055 105,1020 122,930 140,700 160,380 178,260 195,238 215,380 232,470 250,560 270,780 287,900 306,1075 323,1105 342,920 360,800 378,600 397,320 415,190 433,400 452,560 470,790 488,1040 507,1100 525,850 543,660 561,480 579,380 597,350 615,375 634,620 652,840 670,975 688,780 707,520 725,500 743,487 761,610 779,870 798,960 816,1040 834,1140 852,1180 871,900 889,820 907,630 925,665 943,735 961,850 980,870 998,895 1016,875 1034,830 1053,805 1070,785 1090,670 1108,645 1126,645 1145,550 1163,590 1181,630 1199,740 1217,590 1235,575 1254,625 1272,550 1290,470 1308,380 1326,270 1345,260 1363,480 1381,620 1399,815 1417,680 1436,570 1454,592 1472,603');
  var oscDots = chain('z7', '93,458 111,406 129,412 148,438 239,447 257,405 275,367 294,405 512,832 531,870 549,898 568,925 586,925 604,920 622,912 640,906 658,922 676,913 696,880 1114,844 1133,848 1151,868 1170,920 1188,940 1206,906 1224,862',
    'z10', '87,938 105,1002 123,1065 142,1080 160,1020 178,944 998,920 1017,977 1036,1005 1054,1025 1072,1035 1090,1025 1108,1016 1126,1008 1144,975 1163,948 1182,922 1199,928 1417,513 1436,500 1454,510 1472,495');
  lines.forEach(function (l) { el(o, 'polyline', { 'class': 'osc-line', stroke: l[0], 'stroke-width': l[1], points: str(l[2]) }); });
  var base = 1689.5;
  el(o, 'polygon', { 'class': 'osc-area', points: areaPts[0][0].toFixed(1) + ',' + base + ' ' + str(areaPts) + ' ' + areaPts[areaPts.length - 1][0].toFixed(1) + ',' + base });
  oscDots.forEach(function (d) { el(o, 'circle', { cx: d[0].toFixed(1), cy: d[1].toFixed(1), r: 5.5, fill: '#ffeb3b' }); });
  [[1611, '#6b6b33'], [1637, '#8a5c0c'], [1674, '#2f6a2f'], [1706, '#8a2831'], [1743, '#8a5c0c'], [1769, '#8a2831']].forEach(function (d) {
    el(o, 'line', { 'class': 'dash', x1: 22, x2: 3727, y1: d[0], y2: d[0], stroke: d[1] });
  });
  el(o, 'line', { 'class': 'dash-mid', x1: 30, x2: 3737, y1: 1689.5, y2: 1689.5 });
})();
```
